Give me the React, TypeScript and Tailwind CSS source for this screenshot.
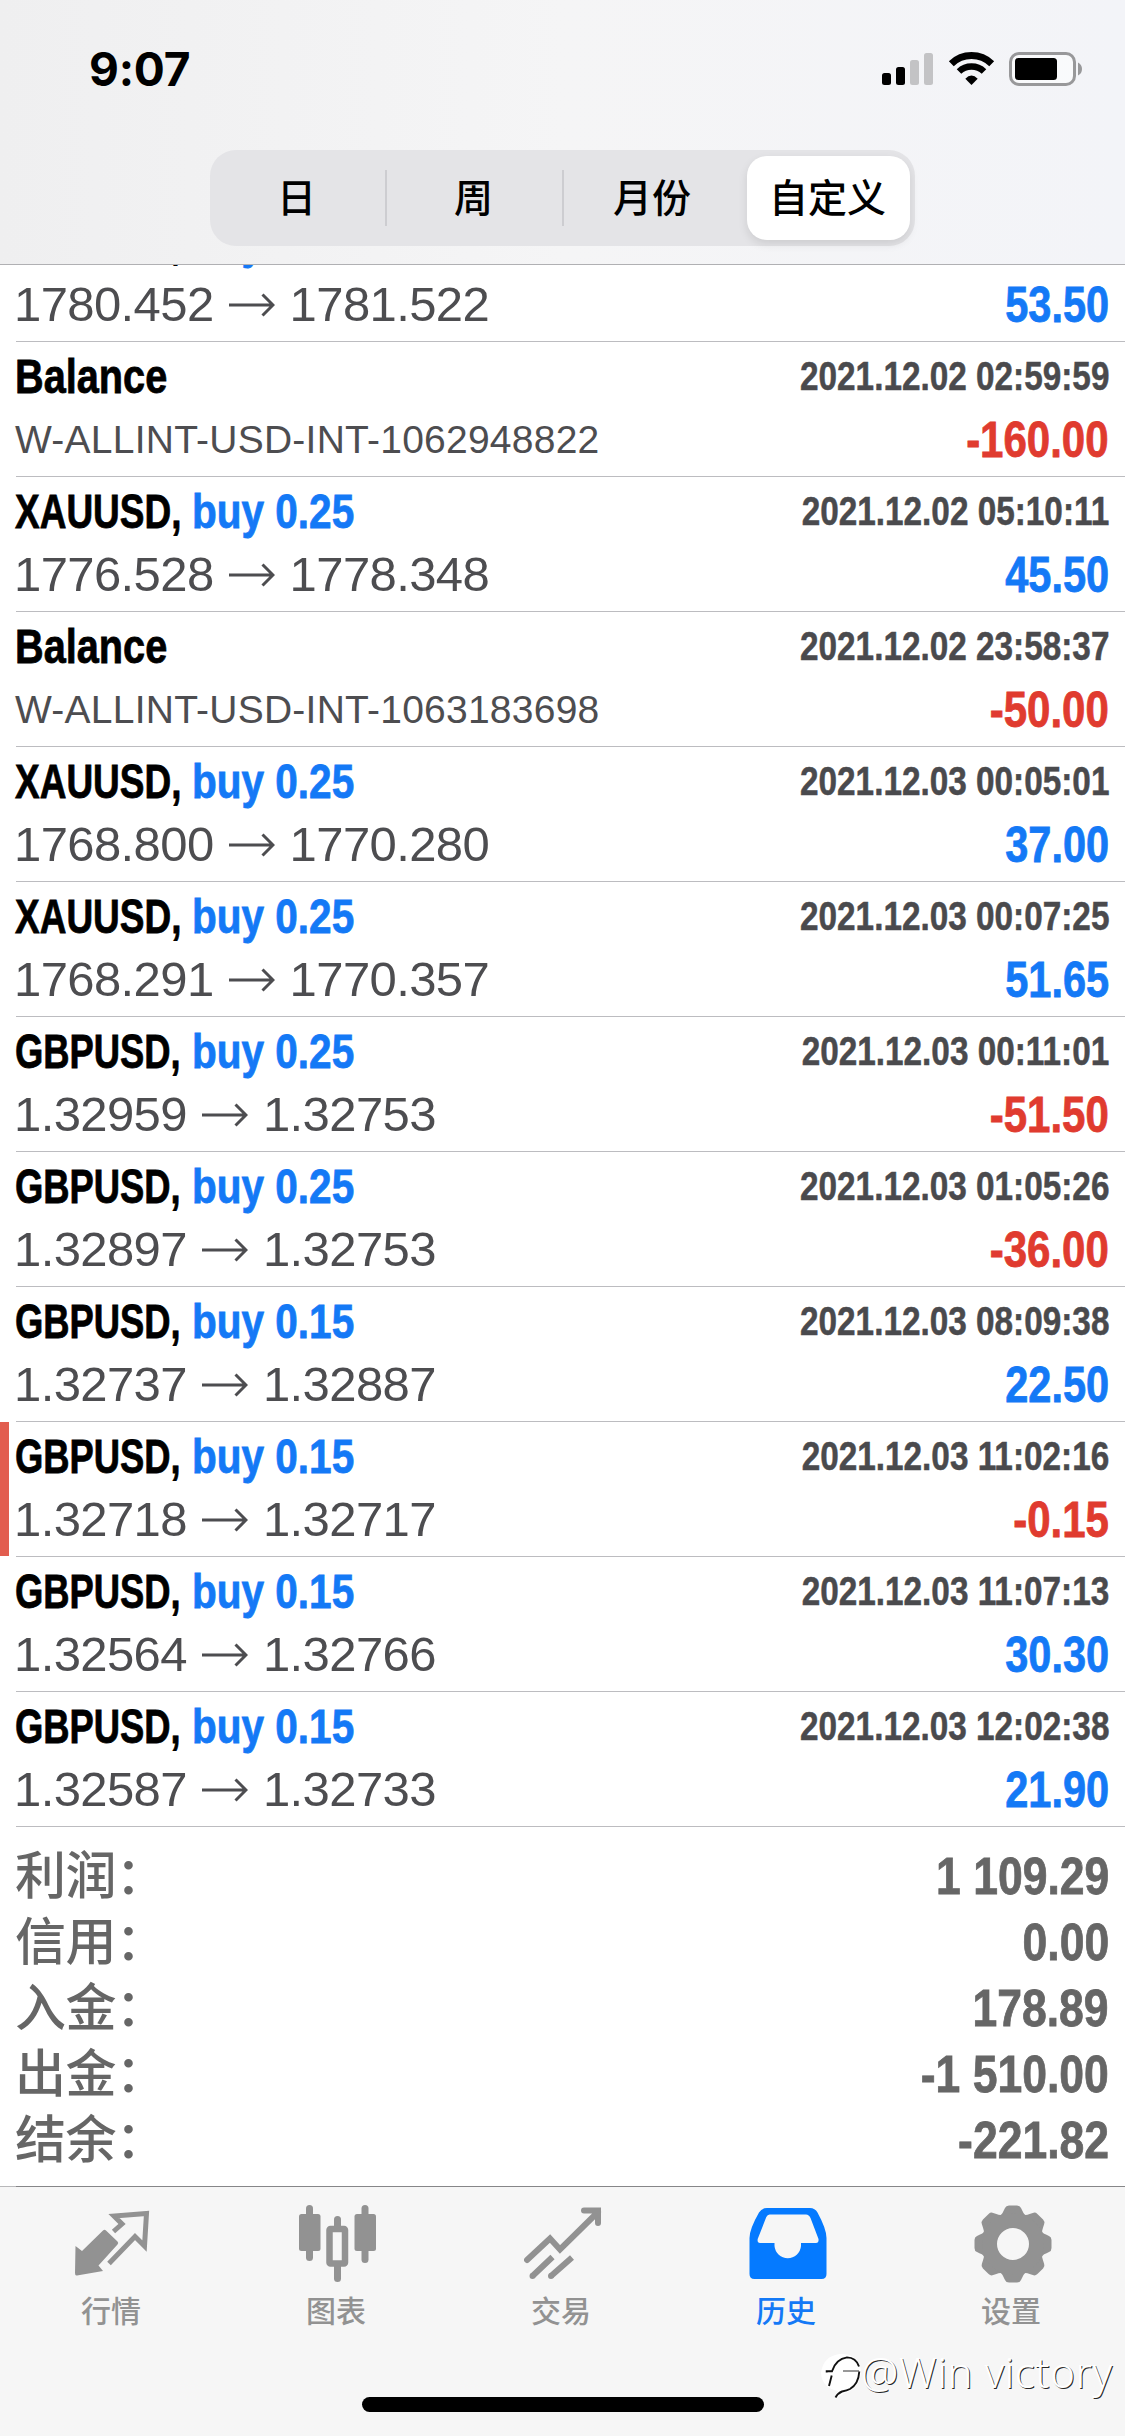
import React from "react";

type Entry = {
  title: string;
  side?: string;
  from?: string;
  to?: string;
  note?: string;
  time: string;
  amount: string;
  flagged?: boolean;
};

const entries: Entry[] = [
  { title: "XAUUSD,", side: "buy 0.25", from: "1780.452", to: "1781.522", time: "", amount: "53.50" },
  { title: "Balance", note: "W-ALLINT-USD-INT-1062948822", time: "2021.12.02 02:59:59", amount: "-160.00" },
  { title: "XAUUSD,", side: "buy 0.25", from: "1776.528", to: "1778.348", time: "2021.12.02 05:10:11", amount: "45.50" },
  { title: "Balance", note: "W-ALLINT-USD-INT-1063183698", time: "2021.12.02 23:58:37", amount: "-50.00" },
  { title: "XAUUSD,", side: "buy 0.25", from: "1768.800", to: "1770.280", time: "2021.12.03 00:05:01", amount: "37.00" },
  { title: "XAUUSD,", side: "buy 0.25", from: "1768.291", to: "1770.357", time: "2021.12.03 00:07:25", amount: "51.65" },
  { title: "GBPUSD,", side: "buy 0.25", from: "1.32959", to: "1.32753", time: "2021.12.03 00:11:01", amount: "-51.50" },
  { title: "GBPUSD,", side: "buy 0.25", from: "1.32897", to: "1.32753", time: "2021.12.03 01:05:26", amount: "-36.00" },
  { title: "GBPUSD,", side: "buy 0.15", from: "1.32737", to: "1.32887", time: "2021.12.03 08:09:38", amount: "22.50" },
  { title: "GBPUSD,", side: "buy 0.15", from: "1.32718", to: "1.32717", time: "2021.12.03 11:02:16", amount: "-0.15", flagged: true },
  { title: "GBPUSD,", side: "buy 0.15", from: "1.32564", to: "1.32766", time: "2021.12.03 11:07:13", amount: "30.30" },
  { title: "GBPUSD,", side: "buy 0.15", from: "1.32587", to: "1.32733", time: "2021.12.03 12:02:38", amount: "21.90" },
];

const totals = [
  ["利润：", "1 109.29"],
  ["信用：", "0.00"],
  ["入金：", "178.89"],
  ["出金：", "-1 510.00"],
  ["结余：", "-221.82"],
];

function StatusBar() {
  return (
    <div className="flex h-[150px] items-start justify-between pl-[89px] pr-[42px] pt-[48px]">
      <span className="font-['Inter'] text-[46px] font-bold leading-[42px] tracking-[-0.2px] text-black">9:07</span>
      <svg className="mt-[4px] h-[34px] w-[201px]" viewBox="0 0 201 34">
        <rect x="0" y="21" width="9" height="12" rx="2.5" />
        <rect x="14" y="15" width="9" height="18" rx="2.5" />
        <rect x="28" y="8" width="9" height="25" rx="2.5" fill="#c3c3c5" />
        <rect x="42" y="1" width="9" height="32" rx="2.5" fill="#c3c3c5" />
        <g fill="none" stroke="#000">
          <path d="M69.300 11.700A29 29 0 0 1 109.700 11.700" strokeWidth="7" />
          <path d="M77 19.500A18 18 0 0 1 102 19.500" strokeWidth="6.500" />
        </g>
        <path d="M89.500 33L83.300 26.700Q89.500 20.500 95.700 26.700Z" />
        <rect x="128.500" y="1.500" width="64" height="31" rx="8.500" fill="#fff" fillOpacity="0.500" stroke="#98989a" strokeWidth="3" />
        <rect x="133" y="6" width="42" height="22" rx="3.500" />
        <path d="M196 10.500Q200 12.500 200 17T196 23.500Z" fill="#98989a" />
      </svg>
    </div>
  );
}

function RangePicker() {
  return (
    <div className="ml-[210px] flex h-[96px] w-[705px] items-center rounded-[26px] bg-[#e4e4e7] text-[39px] font-medium leading-none text-black">
      <div className="flex w-[175px] justify-center pr-[2px]">日</div>
      <div className="h-[56px] w-[2px] bg-[#cdcdd1]" />
      <div className="flex w-[175px] justify-center pr-[2px]">周</div>
      <div className="h-[56px] w-[2px] bg-[#cdcdd1]" />
      <div className="flex w-[183px] justify-center pr-[7px]">月份</div>
      <div className="flex h-[84px] w-[163px] items-center justify-center rounded-[20px] bg-white pr-[2px] shadow-[0_4px_10px_rgba(0,0,0,0.1)]">自定义</div>
    </div>
  );
}

function nameScale(e: Entry) {
  if (!e.side) return "inline-block origin-left scale-x-[0.81]";
  return e.title === "GBPUSD,"
    ? "inline-block origin-left scale-x-[0.742]"
    : "inline-block origin-left scale-x-[0.755]";
}

function Row({ e }: { e: Entry }) {
  const negative = e.amount.startsWith("-");
  return (
    <div className="relative h-[135px] shrink-0 pl-[16px]">
      {e.flagged && <div className="absolute left-0 top-0 h-[134px] w-[9px] bg-[#e25d4f]" />}
      <div className="flex h-[135px] justify-between border-b border-[#bcbcc0] pr-[16px]">
        <div className="flex flex-col whitespace-nowrap">
          <div className="-ml-px flex h-[68px] pt-[6px] text-[49px] font-bold leading-[56px] [-webkit-text-stroke:0.8px_currentColor]">
            <div className="w-[177px] text-black">
              <span className={nameScale(e)}>{e.title}</span>
            </div>
            <span className="inline-block origin-left scale-x-[0.827] text-[#1479f6]">{e.side}</span>
          </div>
          {e.note ? (
            <div className="-ml-px text-[39px] leading-[59px] tracking-[0.24px] text-[#4d4d50]">{e.note}</div>
          ) : (
            <div className="-ml-[2px] flex text-[49px] leading-[58px] tracking-[-0.6px] text-[#4d4d50]">
              <span>{e.from}</span>
              <svg className="ml-[15px] mr-[15px] mt-[10px] h-[40px] w-[46px]" viewBox="0 0 46 40" fill="none" stroke="#4d4d50" strokeWidth="3">
                <path d="M0 20H44M33.500 9.500L44 20L33.500 30.500" />
              </svg>
              <span>{e.to}</span>
            </div>
          )}
        </div>
        <div className="flex flex-col items-end whitespace-nowrap font-bold">
          <div className="h-[69px] origin-right scale-x-[0.833] pt-[6px] text-[40px] leading-[56px] text-[#4a4a4d] [-webkit-text-stroke:0.5px_currentColor]">{e.time}</div>
          <div className={negative ? "origin-right scale-x-[0.84] text-[50px] leading-[58px] text-[#e03b2f] [-webkit-text-stroke:0.8px_currentColor]" : "origin-right scale-x-[0.83] text-[50px] leading-[58px] text-[#1479f6] [-webkit-text-stroke:0.8px_currentColor]"}>{e.amount}</div>
        </div>
      </div>
    </div>
  );
}

function QuotesIcon() {
  return (
    <svg className="h-[78px] w-[78px]" viewBox="0 0 78 78">
      <path d="M1.500 41L8 46L29 25.500Q30.500 24 32 25.500L43.500 36.500Q45 38 43.500 39.500L24.500 60.500L29 66L3 70.500Q1 71 1 68Z" fill="#929292" />
      <path d="M39.500 26.500L48 19L40 11L72.500 8.500L70.500 41L61 31.500L35 58.500" fill="none" stroke="#929292" strokeWidth="5" />
    </svg>
  );
}

function ChartIcon() {
  return (
    <svg className="h-[78px] w-[78px]" viewBox="0 0 78 78" fill="#929292">
      <rect x="7" y="0" width="7" height="56" rx="3.500" />
      <rect x="0" y="9" width="21.500" height="37" rx="2.500" />
      <rect x="62.500" y="0" width="7" height="58" rx="3.500" />
      <rect x="55.500" y="9" width="21.500" height="37" rx="2.500" />
      <rect x="35" y="11" width="7" height="66" rx="3.500" />
      <rect x="30.500" y="24" width="15.500" height="34.500" rx="1" fill="#f6f6f6" stroke="#929292" strokeWidth="6.500" />
    </svg>
  );
}

function TradeIcon() {
  return (
    <svg className="h-[78px] w-[78px]" viewBox="0 0 78 78" fill="none" stroke="#929292" strokeWidth="6">
      <path d="M3 55L26 33.500L36 44.500L74 7M60 5.500H74V18" strokeLinecap="round" />
      <path d="M8.500 71L28.500 52M27 71L48 52.500" />
      <path d="M8.500 71h.01M27 71h.01" strokeLinecap="round" />
    </svg>
  );
}

function HistoryIcon() {
  return (
    <svg className="h-[78px] w-[78px]" viewBox="0 0 78 78">
      <path fill="#057aff" fillRule="evenodd" d="M18 3H61Q66 3 68.500 7.500Q77.500 24 77.500 33V69Q77.500 74 72.500 74H5.500Q.5 74 .5 69V33Q.5 24 10 7.500Q13 3 18 3ZM20.500 9.500Q18.500 9.500 17.300 12L8.700 34Q8 38 11 38H25.500V41A13.300 13.300 0 0 0 52 41V38H67Q70 38 69.500 34L61.500 13Q60 9.500 57 9.500Z" />
    </svg>
  );
}

function SettingsIcon() {
  return (
    <svg className="h-[78px] w-[78px]" viewBox="-39 -39 78 78" fill="#929292">
      {[0, 45, 90, 135, 180, 225, 270, 315].map((angle) => (
        <path key={angle} transform={`rotate(${angle})`} d="M-14 -28Q-11 -29 -9.500 -33L-8 -36Q-7 -38.500 -4 -38.500H4Q7 -38.500 8 -36L9.500 -33Q11 -29 14 -28V-20H-14Z" />
      ))}
      <circle r="23.500" fill="none" stroke="#929292" strokeWidth="15" />
    </svg>
  );
}

const tabs = [
  { label: "行情", icon: <QuotesIcon /> },
  { label: "图表", icon: <ChartIcon /> },
  { label: "交易", icon: <TradeIcon /> },
  { label: "历史", icon: <HistoryIcon />, active: true },
  { label: "设置", icon: <SettingsIcon /> },
];

export default function App() {
  return (
    <div className="relative flex h-[2436px] w-[1125px] flex-col overflow-hidden bg-white font-['Liberation_Sans','Noto_Sans_CJK_SC',sans-serif]">
      <header className="h-[265px] shrink-0 border-b border-[#b0b0b3] bg-gradient-to-r from-[#efeff0] via-[#f5f5f6] to-[#f3f4f8]">
        <StatusBar />
        <RangePicker />
      </header>

      <main className="flex h-[1921px] shrink-0 flex-col overflow-hidden">
        <div className="-mt-[58px] flex flex-col">
          {entries.map((e, i) => (
            <Row key={i} e={e} />
          ))}
        </div>
        <div className="flex flex-col pl-[15px] pr-[16px] pt-[17px] text-[#666666]">
          {totals.map(([label, value]) => (
            <div key={label} className="flex h-[66px] items-start justify-between whitespace-nowrap">
              <span className="text-[51px] font-medium leading-[66px] tracking-[-0.6px]">{label}</span>
              <span className="origin-right scale-x-[0.848] text-[52.5px] font-bold leading-[64px] [-webkit-text-stroke:0.8px_currentColor]">{value}</span>
            </div>
          ))}
        </div>
      </main>

      <nav className="flex h-[250px] flex-col items-center bg-[#f6f6f6]">
        <div className="flex h-px w-full bg-[#868688]">
          <div className="h-px w-[16px] bg-[#b8b8ba]" />
        </div>
        <div className="grid h-[210px] w-full grid-cols-5 pt-[18px]">
          {tabs.map((t) => (
            <div key={t.label} className="flex flex-col items-center">
              {t.icon}
              <span className={t.active ? "mt-[9px] pr-[3px] text-[30px] font-medium leading-[40px] text-[#1479f6]" : "mt-[9px] pr-[3px] text-[30px] font-medium leading-[40px] text-[#929292]"}>{t.label}</span>
            </div>
          ))}
        </div>
        <div className="h-[15px] w-[402px] rounded-full bg-black" />
      </nav>

      <div className="absolute left-[821px] top-[2350px] flex items-start whitespace-nowrap text-white">
        <svg className="h-[50px] w-[40px]" viewBox="0 0 40 50" fill="none">
          <path d="M19 4Q38 3 40 21Q39 39 24 43L14 49L17 41Q1 38 0 23Q2 6 19 4Z" fill="#fff" />
          <path d="M5.700 22.500V21.200H11Q15 9 26 7.400Q35 7.500 38 16.500M10.700 25.500L8 36" stroke="#111" strokeWidth="1.900" />
          <path d="M22 21H38" stroke="#333" strokeWidth="1" />
          <path d="M38.300 21.500Q37.500 34 29 39Q26 40.500 21 41.500Q17 43 14.500 47.500" stroke="#111" strokeWidth="1.900" />
        </svg>
        <span className="-mt-[5px] font-['Noto_Sans'] text-[42px] font-light leading-[54px] tracking-[0.5px] [text-shadow:1px_1px_0.5px_rgba(0,0,0,0.85)]">@Win victory</span>
      </div>
    </div>
  );
}
